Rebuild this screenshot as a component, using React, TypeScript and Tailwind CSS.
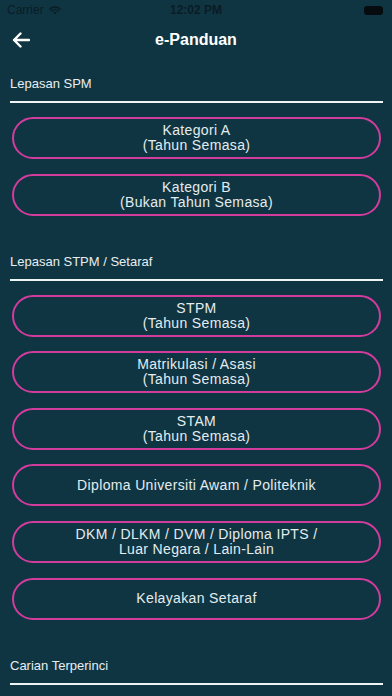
import React from "react";

const font = { fontFamily: '"Liberation Sans", Arial, sans-serif' };

function Btn({ lines }: { lines: string[] }) {
  return (
    <div className="h-[42px] mx-[2px] rounded-full border-2 border-[#d23c9c] flex flex-col items-center justify-center text-[14px] leading-[15px] tracking-[0.35px] text-[#e4ecee]">
      {lines.map((l, i) => (
        <span key={i}>{l}</span>
      ))}
    </div>
  );
}

function Section({ title, children }: { title: string; children?: React.ReactNode }) {
  return (
    <div className="flex flex-col">
      <div className="text-[13px] leading-[16px] text-[#e8eef0] h-[16px]">{title}</div>
      <div className="mt-[9px] h-[2px] bg-[#eef3f3]" />
      {children ? <div className="mt-[14px] flex flex-col gap-[14.6px]">{children}</div> : null}
    </div>
  );
}

export default function App() {
  return (
    <div className="w-[392px] h-[696px] bg-[#0f3543] overflow-hidden" style={font}>
      {/* status bar */}
      <div className="h-[20px] relative flex items-center px-[7px] text-[#0b1c24]">
        <span className="text-[12px] leading-[12px]">Carrier</span>
        <svg width="12" height="9" viewBox="0 0 12 9" className="ml-[5px]">
          <path d="M6 8.6 L4.2 6.6 A2.6 2.6 0 0 1 7.8 6.6 Z" fill="#0b1c24" />
          <path d="M2.6 5 A4.9 4.9 0 0 1 9.4 5" stroke="#0b1c24" strokeWidth="1.5" fill="none" strokeLinecap="round" />
          <path d="M0.9 3.1 A7.3 7.3 0 0 1 11.1 3.1" stroke="#0b1c24" strokeWidth="1.5" fill="none" strokeLinecap="round" />
        </svg>
        <span className="absolute left-0 right-0 text-center text-[12px] leading-[12px] font-bold pointer-events-none">12:02 PM</span>
        <div className="ml-auto mr-[2px] flex items-center">
          <div className="w-[19px] h-[9px] rounded-[3px] bg-[#050b0e]" />
        </div>
      </div>
      {/* nav bar */}
      <div className="h-[40px] relative flex items-center justify-center">
        <svg width="18" height="16" viewBox="0 0 18 16" className="absolute left-[12px] top-[12px]">
          <path d="M17 8 H2 M8.5 1.5 L2 8 L8.5 14.5" stroke="#ffffff" strokeWidth="2.4" fill="none" strokeLinecap="round" strokeLinejoin="round" />
        </svg>
        <span className="text-[16px] font-bold text-white">e-Panduan</span>
      </div>
      {/* content */}
      <div className="pl-[10px] pr-[9px] pt-[16px] flex flex-col gap-[38px]">
        <Section title="Lepasan SPM">
          <Btn lines={["Kategori A", "(Tahun Semasa)"]} />
          <Btn lines={["Kategori B", "(Bukan Tahun Semasa)"]} />
        </Section>
        <Section title="Lepasan STPM / Setaraf">
          <Btn lines={["STPM", "(Tahun Semasa)"]} />
          <Btn lines={["Matrikulasi / Asasi", "(Tahun Semasa)"]} />
          <Btn lines={["STAM", "(Tahun Semasa)"]} />
          <Btn lines={["Diploma Universiti Awam / Politeknik"]} />
          <Btn lines={["DKM / DLKM / DVM / Diploma IPTS /", "Luar Negara / Lain-Lain"]} />
          <Btn lines={["Kelayakan Setaraf"]} />
        </Section>
        <Section title="Carian Terperinci" />
      </div>
    </div>
  );
}
